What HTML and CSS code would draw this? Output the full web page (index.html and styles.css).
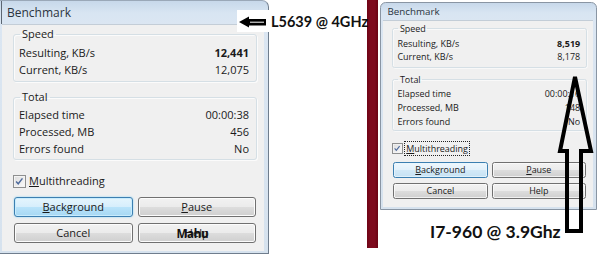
FILE: index.html
```html
<!DOCTYPE html>
<html>
<head>
<meta charset="utf-8">
<link rel="stylesheet" href="styles.css">
</head>
<body>
<div class="page">
  <div class="dlg dlg-left">
    <div class="title">Benchmark</div>
    <div class="client">
      <fieldset class="grp grp-speed">
        <legend>Speed</legend>
        <div class="row"><span>Resulting, KB/s</span><b>12,441</b></div>
        <div class="row"><span>Current, KB/s</span><span>12,075</span></div>
      </fieldset>
      <fieldset class="grp grp-total">
        <legend>Total</legend>
        <div class="row"><span>Elapsed time</span><span>00:00:38</span></div>
        <div class="row"><span>Processed, MB</span><span>456</span></div>
        <div class="row"><span>Errors found</span><span>No</span></div>
      </fieldset>
      <div class="chk">
        <span class="box"><svg viewBox="0 0 13 13" width="11" height="11"><path d="M2.5 6.5 L5 9.2 L10 2.8" fill="none" stroke="#4e6a9c" stroke-width="1.7"/></svg></span>
        <span class="lbl"><u>M</u>ultithreading</span>
      </div>
      <div class="btns">
        <div class="btn btn-default"><u>B</u>ackground</div>
        <div class="btn"><u>P</u>ause</div>
        <div class="btn">Cancel</div>
        <div class="btn btn-help">Help<span class="mahu">Mahu</span></div>
      </div>
    </div>
  </div>
  <div class="gap"></div>
  <div class="redbar"></div>
  <div class="rightcol">
    <div class="dlg dlg-right">
      <div class="title">Benchmark</div>
      <div class="client">
        <fieldset class="grp grp-speed">
          <legend>Speed</legend>
          <div class="row"><span>Resulting, KB/s</span><b>8,519</b></div>
          <div class="row"><span>Current, KB/s</span><span>8,178</span></div>
        </fieldset>
        <fieldset class="grp grp-total">
          <legend>Total</legend>
          <div class="row"><span>Elapsed time</span><span>00:00:16</span></div>
          <div class="row"><span>Processed, MB</span><span>148</span></div>
          <div class="row"><span>Errors found</span><span>No</span></div>
        </fieldset>
        <div class="chk">
          <span class="box"><svg viewBox="0 0 13 13" width="11" height="11"><path d="M2.5 6.5 L5 9.2 L10 2.8" fill="none" stroke="#4e6a9c" stroke-width="1.7"/></svg></span>
          <span class="lbl lbl-focus"><u>M</u>ultithreading</span>
        </div>
        <div class="btns">
          <div class="btn btn-default btn-soft"><u>B</u>ackground</div>
          <div class="btn"><u>P</u>ause</div>
          <div class="btn">Cancel</div>
          <div class="btn">Help</div>
        </div>
      </div>
    </div>
    <div class="caption">I7-960 @ 3.9Ghz</div>
  </div>

  <div class="note">
    <svg class="note-arrow" viewBox="0 0 30 12" width="30" height="12">
      <polygon points="1,6 11,0.5 11,3 28,3 28,9.5 11,9.5 11,11.5" fill="#000"/>
      <line x1="12" y1="6.2" x2="26" y2="6.2" stroke="#fff" stroke-width="1"/>
    </svg>
    <span class="note-text">L5639 @ 4GHz</span>
  </div>

  <svg class="uparrow" viewBox="0 0 600 257" width="600" height="257">
    <polygon points="575,77 560,151 567,151 567,231 581,231 581,151 591,151" fill="none" stroke="#000" stroke-width="4" stroke-linejoin="miter"/>
  </svg>
</div>
</body>
</html>
```

FILE: styles.css
```css
* { box-sizing: border-box; }
html, body { margin: 0; padding: 0; }
body {
  width: 600px;
  height: 257px;
  background: #fff;
  overflow: hidden;
  font-family: "Open Sans", "Noto Sans", sans-serif;
  color: #1a1a1a;
}
.page {
  position: relative;
  display: flex;
  align-items: flex-start;
  width: 600px;
  height: 257px;
}

/* dialog frame */
.dlg {
  flex: none;
  display: flex;
  flex-direction: column;
  background: linear-gradient(180deg, #c7d8ea 0px, #d8e5f2 12px, #dbe6f2 24px, #d6e2ee 100%);
  border: 1px solid #6f7d8d;
  border-left-width: 0;
  border-top-right-radius: 7px;
  padding: 0 4px 2px 2px;
}
.dlg-left {
  width: 269px;
  height: 254px;
  border-top-color: #9aa8b8;
}
.title {
  height: 23px;
  line-height: 23px;
  padding-left: 5px;
  font-size: 12px;
  color: #2b3440;
  flex: none;
}
.dlg-left .title { box-shadow: -1px 0 0 #5c6672; }
.client {
  flex: 1;
  background: #f0f0f0;
  border: 1px solid #c3cdd7;
  border-width: 1px 0 0 0;
  padding: 1px 7px 0 11px;
  font-size: 11px;
}

/* group boxes */
.grp {
  margin: 0;
  border: 1px solid #d5dfe5;
  border-radius: 3px;
  padding: 2px 7px 3px 5px;
  box-shadow: inset 1px 1px 0 #fbfbfb, 1px 1px 0 #fbfbfb;
  min-width: 0;
}
.grp legend {
  margin-left: 1px;
  padding: 0 2px;
  line-height: 16px;
  font-size: 11px;
}
.grp-total {
  margin-top: 7px;
  padding-top: 1px;
  padding-bottom: 2px;
}
.row {
  display: flex;
  justify-content: space-between;
  height: 17px;
  line-height: 17px;
  white-space: nowrap;
}
.row b { font-weight: 700; }

/* checkbox */
.chk {
  margin-top: 13px;
  height: 16px;
  display: flex;
  align-items: center;
  gap: 3px;
}
.box {
  width: 13px;
  height: 13px;
  border: 1px solid #8e8f8f;
  background: linear-gradient(135deg, #dcdcdc, #fbfbfb);
  box-shadow: inset 0 0 0 1px #f4f4f4;
  display: flex;
  align-items: center;
  justify-content: center;
}
.lbl { line-height: 16px; }
.lbl-focus { outline: 1px dotted #222; outline-offset: 0; padding: 0 1px; }

/* buttons */
.btns {
  margin: 8px 1px 0 1px;
  display: grid;
  grid-template-columns: 1fr 1fr;
  column-gap: 5px;
  row-gap: 6px;
}
.btn {
  position: relative;
  height: 20px;
  line-height: 18px;
  text-align: center;
  border: 1px solid #707070;
  border-radius: 3px;
  background: linear-gradient(180deg, #f2f2f2 0%, #ebebeb 50%, #dddddd 51%, #cfcfcf 100%);
  box-shadow: inset 0 0 0 1px #fcfcfc;
  color: #1a1a1a;
  white-space: nowrap;
}
.btn-default {
  border-color: #3c7fb1;
  background: linear-gradient(180deg, #e5f5fd 0%, #d6eefc 50%, #b9e3fa 51%, #a6d8f3 100%);
  box-shadow: inset 0 0 0 1px #c8ecfd, 0 0 2px #7fd0f5;
}
.btn-soft {
  background: linear-gradient(180deg, #eef7fd 0%, #e3f1fb 50%, #d3e9f7 51%, #c6e2f4 100%);
  box-shadow: inset 0 0 0 1px #e9f6fd;
}
.mahu {
  position: absolute;
  left: 38px;
  top: 1px;
  font-weight: 700;
  font-size: 11.5px;
  color: #111;
  letter-spacing: -0.3px;
}

/* middle */
.gap { width: 98px; height: 1px; flex: none; }
.redbar {
  width: 11px;
  height: 248px;
  flex: none;
  background: linear-gradient(90deg, #6e0416, #7e0b1e 30%, #7e0b1e 70%, #6a0414);
}

/* right column */
.rightcol {
  margin-left: 2px;
  margin-top: 2px;
  display: flex;
  flex-direction: column;
}
.dlg-right {
  zoom: 0.815;
  width: 266px;
  height: 255px;
  border-left-width: 1px;
  border-color: #8995a3;
  border-radius: 7px 7px 0 0;
  padding: 0 4px 2px 3px;
}
.dlg-right .title { height: 21px; line-height: 21px; padding-left: 5px; }
.caption {
  margin-top: 10px;
  padding-left: 50px;
  font-family: "Lato", "Open Sans", sans-serif;
  font-weight: 700;
  font-size: 17.5px;
  line-height: 24px;
  color: #111;
  white-space: nowrap;
}

/* annotations */
.note {
  position: absolute;
  left: 237px;
  top: 10px;
  width: 130px;
  height: 22px;
  background: #fff;
  display: flex;
  align-items: center;
  gap: 3px;
  padding-left: 1px;
}
.note-arrow { flex: none; margin-top: 1px; }
.note-text {
  font-family: "Lato", "Open Sans", sans-serif;
  font-weight: 700;
  font-size: 14.5px;
  color: #111;
  white-space: nowrap;
}
.uparrow {
  position: absolute;
  left: 0;
  top: 0;
  pointer-events: none;
}
```
